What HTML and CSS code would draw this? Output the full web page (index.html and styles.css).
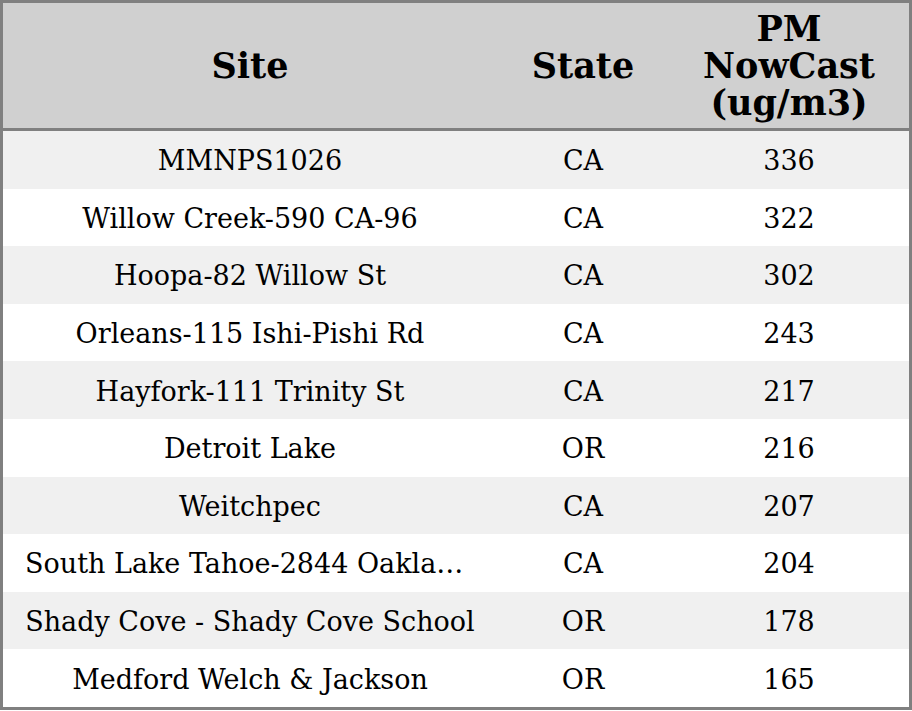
FILE: index.html
```html
<!DOCTYPE html>
<html>
<head>
<meta charset="utf-8">
<link rel="stylesheet" href="styles.css">
</head>
<body>
<table class="aq">
  <colgroup>
    <col class="c-site">
    <col class="c-state">
    <col class="c-pm">
  </colgroup>
  <thead>
    <tr><th>Site</th><th>State</th><th>PM<br>NowCast<br>(ug/m3)</th></tr>
  </thead>
  <tbody>
    <tr><td><div class="trunc">MMNPS1026</div></td><td>CA</td><td>336</td></tr>
    <tr><td><div class="trunc">Willow Creek-590 CA-96</div></td><td>CA</td><td>322</td></tr>
    <tr><td><div class="trunc">Hoopa-82 Willow St</div></td><td>CA</td><td>302</td></tr>
    <tr><td><div class="trunc">Orleans-115 Ishi-Pishi Rd</div></td><td>CA</td><td>243</td></tr>
    <tr><td><div class="trunc">Hayfork-111 Trinity St</div></td><td>CA</td><td>217</td></tr>
    <tr><td><div class="trunc">Detroit Lake</div></td><td>OR</td><td>216</td></tr>
    <tr><td><div class="trunc">Weitchpec</div></td><td>CA</td><td>207</td></tr>
    <tr><td><div class="trunc">South Lake Tahoe-2844 Oakland Ave</div></td><td>CA</td><td>204</td></tr>
    <tr><td><div class="trunc">Shady Cove - Shady Cove School</div></td><td>OR</td><td>178</td></tr>
    <tr><td><div class="trunc">Medford Welch &amp; Jackson</div></td><td>OR</td><td>165</td></tr>
  </tbody>
</table>
</body>
</html>
```
FILE: styles.css
```css
html, body {
  margin: 0;
  padding: 0;
  background: #ffffff;
}
.aq {
  width: 912px;
  border-collapse: separate;
  border-spacing: 0;
  table-layout: fixed;
  border: 3px solid #808080;
  font-family: "DejaVu Serif", serif;
  color: #000;
}
.c-site { width: 494px; }
.c-state { width: 172px; }
.c-pm { width: 240px; }
.aq th {
  background: #d0d0d0;
  font-weight: bold;
  font-size: 35px;
  line-height: 37px;
  height: 125px;
  padding: 0;
  border-bottom: 3px solid #808080;
  text-align: center;
  vertical-align: middle;
}
.aq td {
  font-size: 27px;
  height: 55.6px;
  padding: 2px 22px 0;
  text-align: center;
  vertical-align: middle;
  white-space: nowrap;
}
.aq tbody tr:nth-child(odd) td { background: #f0f0f0; }
.trunc {
  overflow: hidden;
  text-overflow: ellipsis;
  white-space: nowrap;
}
```
